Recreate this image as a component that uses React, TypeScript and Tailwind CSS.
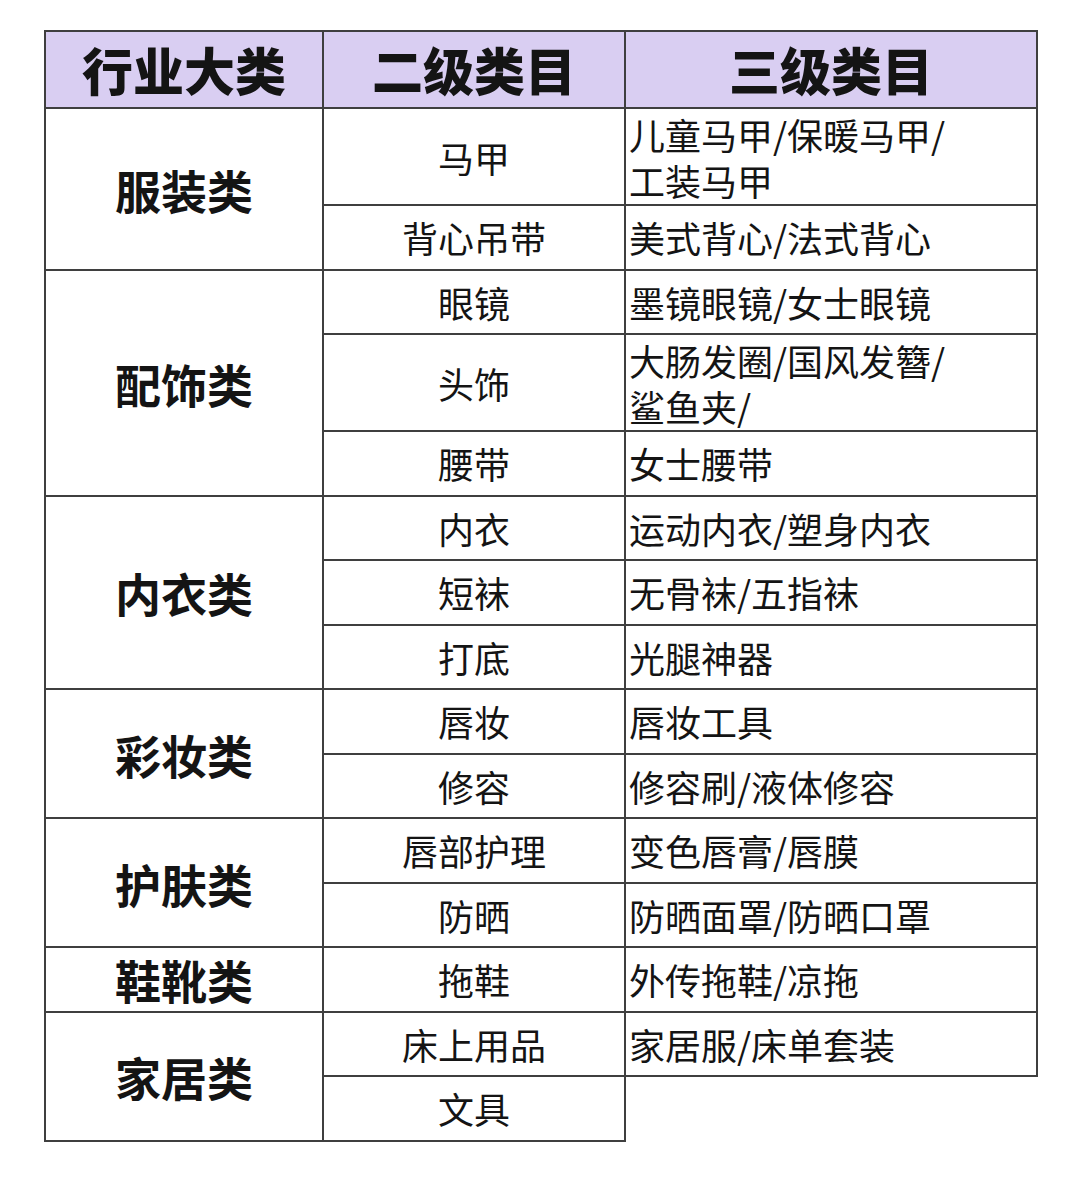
import React from 'react';

type Sub = { name: string; items: string; tall?: boolean; empty?: boolean };
type Group = { cat: string; subs: Sub[] };

const GROUPS: Group[] = [
  {
    cat: '服装类',
    subs: [
      { name: '马甲', items: '儿童马甲/保暖马甲/\n工装马甲', tall: true },
      { name: '背心吊带', items: '美式背心/法式背心' },
    ],
  },
  {
    cat: '配饰类',
    subs: [
      { name: '眼镜', items: '墨镜眼镜/女士眼镜' },
      { name: '头饰', items: '大肠发圈/国风发簪/\n鲨鱼夹/', tall: true },
      { name: '腰带', items: '女士腰带' },
    ],
  },
  {
    cat: '内衣类',
    subs: [
      { name: '内衣', items: '运动内衣/塑身内衣' },
      { name: '短袜', items: '无骨袜/五指袜' },
      { name: '打底', items: '光腿神器' },
    ],
  },
  {
    cat: '彩妆类',
    subs: [
      { name: '唇妆', items: '唇妆工具' },
      { name: '修容', items: '修容刷/液体修容' },
    ],
  },
  {
    cat: '护肤类',
    subs: [
      { name: '唇部护理', items: '变色唇膏/唇膜' },
      { name: '防晒', items: '防晒面罩/防晒口罩' },
    ],
  },
  {
    cat: '鞋靴类',
    subs: [{ name: '拖鞋', items: '外传拖鞋/凉拖' }],
  },
  {
    cat: '家居类',
    subs: [
      { name: '床上用品', items: '家居服/床单套装' },
      { name: '文具', items: '', empty: true },
    ],
  },
];

const App: React.FC = () => {
  return (
    <div className="w-[1080px] h-[1177px] bg-white pt-[30px] pl-[44px] font-['Noto_Sans_CJK_SC',sans-serif] text-[#141414]">
      <table className="w-[992px] table-fixed border-collapse">
        <colgroup>
          <col className="w-[278px]" />
          <col className="w-[302px]" />
          <col className="w-[412px]" />
        </colgroup>
        <thead>
          <tr className="h-[77px] bg-[#d9cef2]">
            <th className="border-2 border-[#3f3f3f] text-[51px] font-black leading-none">行业大类</th>
            <th className="border-2 border-[#3f3f3f] text-[51px] font-black leading-none">二级类目</th>
            <th className="border-2 border-[#3f3f3f] text-[51px] font-black leading-none">三级类目</th>
          </tr>
        </thead>
        <tbody>
          {GROUPS.map((g) =>
            g.subs.map((s, i) => (
              <tr key={g.cat + s.name} className={s.tall ? 'h-[97px]' : 'h-[64.5px]'}>
                {i === 0 && (
                  <td
                    rowSpan={g.subs.length}
                    className="border-2 border-[#3f3f3f] text-center text-[46px] font-bold leading-none"
                  >
                    {g.cat}
                  </td>
                )}
                <td className="border-2 border-[#3f3f3f] text-center text-[36px] leading-none">{s.name}</td>
                {s.empty ? (
                  <td className="border-t-2 border-l-2 border-[#3f3f3f]"></td>
                ) : (
                  <td className="border-2 border-[#3f3f3f] pl-[3px] text-left text-[36px] leading-[46px] whitespace-pre-line">
                    {s.items}
                  </td>
                )}
              </tr>
            ))
          )}
        </tbody>
      </table>
    </div>
  );
};

export default App;
